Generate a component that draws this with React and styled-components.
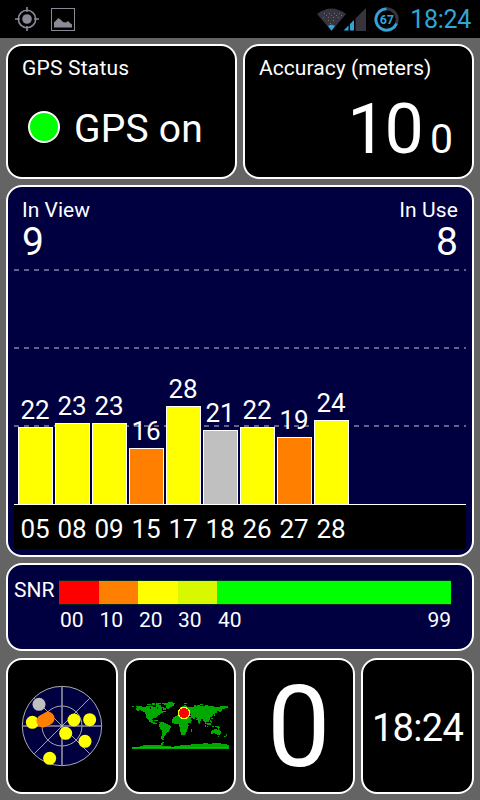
import React from "react";
import styled, { createGlobalStyle } from "styled-components";

const GlobalStyle = createGlobalStyle`
  * { box-sizing: border-box; }
  body { margin: 0; background: #646464; }
`;

const Screen = styled.div`
  width: 480px;
  height: 800px;
  overflow: hidden;
  background: #646464;
  color: #fff;
  font-family: Roboto, "Noto Sans", sans-serif;
`;

const StatusBar = styled.header`
  display: flex;
  align-items: center;
  height: 38px;
  padding: 0 9px 0 15px;
  background: #000;
`;

const StatusIcon = styled.svg`
  display: block;
  flex: none;
  margin-left: ${(p) => p.$gap || 0}px;
`;

const Spacer = styled.div`
  flex: 1;
`;

const Text = styled.span`
  display: block;
  white-space: nowrap;
  font-size: ${(p) => p.$size}px;
  line-height: ${(p) => p.$line}px;
  letter-spacing: ${(p) => p.$track || 0}px;
`;

const Clock = styled(Text)`
  color: #2fa5d8;
  margin-left: 11px;
  padding-top: 2px;
`;

const Panels = styled.main`
  display: grid;
  grid-template-rows: 135px 372px 88px 136px;
  row-gap: 6px;
  padding: 6px 6px 0;
  height: 762px;
`;

const TopRow = styled.div`
  display: grid;
  grid-template-columns: 231px 231px;
  column-gap: 6px;
`;

const BottomRow = styled.div`
  display: grid;
  grid-template-columns: 112px 112px 112px 113px;
  justify-content: space-between;
  margin-top: 1px;
  height: 136px;
`;

const Panel = styled.section`
  border: 2px solid #fff;
  border-radius: 16px;
  background: ${(p) => (p.$navy ? "#000040" : "#000")};
  overflow: hidden;
`;

const InfoPanel = styled(Panel)`
  padding: 10px 14px 0;
`;

const StatusLine = styled.div`
  display: flex;
  align-items: center;
  height: 50px;
  margin-top: 22px;
  padding-left: 6px;
  gap: 14px;
`;

const StatusText = styled(Text)`
  padding-top: 3px;
`;

const Lamp = styled.i`
  width: 32px;
  height: 32px;
  border: 2px solid #fff;
  border-radius: 50%;
  background: #0f0;
`;

const AccuracyLine = styled.div`
  display: flex;
  align-items: baseline;
  justify-content: flex-end;
  margin-top: 9px;
  padding-right: 5px;
  gap: 8px;
`;

const ChartPanel = styled(Panel)`
  padding: 11px 6px 0;
`;

const Counters = styled.div`
  display: flex;
  justify-content: space-between;
  height: 71px;
  padding: 0 8px;
`;

const Counter = styled.div`
  display: flex;
  flex-direction: column;
  align-items: ${(p) => (p.$end ? "flex-end" : "flex-start")};
`;

const dash =
  "repeating-linear-gradient(90deg, #62628a 0 5px, transparent 5px 10px)";

const Plot = styled.div`
  display: flex;
  align-items: flex-end;
  gap: 2px;
  height: 236px;
  padding-left: 4px;
  border-bottom: 1px solid #fff;
  background-image: ${dash}, ${dash}, ${dash};
  background-size: 100% 2px;
  background-position: 0 0, 0 78px, 0 156px;
  background-repeat: no-repeat;
`;

const Column = styled.div`
  width: 35px;
  display: flex;
  flex-direction: column;
  align-items: center;
`;

const Value = styled(Text)`
  padding-right: 1px;
`;

const Bar = styled.div`
  width: 35px;
  height: ${(p) => Math.ceil(p.$snr * 3.5)}px;
  border: 1px solid #fff;
  border-bottom: 0;
  background: ${(p) => p.$color};
`;

const Ids = styled.div`
  display: flex;
  gap: 2px;
  height: 44px;
  padding: 7px 0 0 4px;
  background: #000;
`;

const Id = styled(Text)`
  width: 35px;
  padding-right: 1px;
  text-align: center;
`;

const SnrPanel = styled(Panel)`
  padding: 15px 21px 0 6px;
`;

const SnrRow = styled.div`
  display: flex;
`;

const SnrLabel = styled(Text)`
  width: 45px;
`;

const Scale = styled.div`
  display: flex;
  width: 392px;
  height: 25px;
  border: 1px solid rgba(0, 80, 0, 0.5);
  border-width: 1px 0;
`;

const Segment = styled.div`
  width: ${(p) => p.$w}px;
  background: ${(p) => p.$color};
`;

const Ticks = styled.div`
  display: flex;
  padding-left: 46px;
  margin-top: 2px;
`;

const Tick = styled(Text)`
  width: ${(p) => p.$w}px;
  text-align: ${(p) => (p.$end ? "right" : "left")};
`;

const Tile = styled(Panel)`
  display: flex;
  align-items: center;
  justify-content: center;
`;

const TileText = styled(Text)`
  padding-top: 3px;
`;

const Drawing = styled.svg`
  display: block;
  flex: none;
`;

const YELLOW = "#ffff00";
const ORANGE = "#ff8000";
const GREY = "#c0c0c0";

const satellites = [
  { id: "05", snr: 22, color: YELLOW },
  { id: "08", snr: 23, color: YELLOW },
  { id: "09", snr: 23, color: YELLOW },
  { id: "15", snr: 16, color: ORANGE },
  { id: "17", snr: 28, color: YELLOW },
  { id: "18", snr: 21, color: GREY },
  { id: "26", snr: 22, color: YELLOW },
  { id: "27", snr: 19, color: ORANGE },
  { id: "28", snr: 24, color: YELLOW },
];

const segments = [
  { w: 40, color: "#ff0000" },
  { w: 39, color: ORANGE },
  { w: 40, color: YELLOW },
  { w: 39, color: "#d8f800" },
  { w: 234, color: "#00ff00" },
];

const skyDots = [
  [117, 148, GREY],
  [97, 202, YELLOW],
  [129, 198, ORANGE],
  [137, 194, ORANGE],
  [144, 190, ORANGE],
  [222, 195, YELLOW],
  [269, 194, YELLOW],
  [197, 235, YELLOW],
  [255, 259, YELLOW],
  [149, 310, YELLOW],
];

function GpsIcon() {
  return (
    <StatusIcon width="24" height="24" viewBox="0 0 24 24" fill="none" stroke="#8b8995" strokeWidth="1.6">
      <circle cx="12" cy="12" r="8.7" />
      <circle cx="12" cy="12" r="4.8" fill="#8b8995" stroke="none" />
      <path d="M12 0v5M12 19v5M0 12h5M19 12h5" />
    </StatusIcon>
  );
}

function PictureIcon() {
  return (
    <StatusIcon $gap={12} width="24" height="23" viewBox="0 0 24 23">
      <rect x="0.5" y="0.5" width="23" height="22" fill="none" stroke="#8b8995" />
      <path fill="#8b8995" d="M3 19.5v-5l2-2 2.5-2.5L10 12l2 2 3 0.5 2-1.5 2 2 2 1.5v3z" />
    </StatusIcon>
  );
}

function WifiIcon() {
  return (
    <StatusIcon width="29" height="23" viewBox="0 0 29 23">
      <path fill="#35343f" d="M0 6Q14.500-5 29 6L14.500 23Z" />
      <path fill="#2fa5d8" d="M11 18Q14.500 15.500 18 18L14.500 22.500Z" />
      <path
        stroke="#78772c"
        strokeWidth="1"
        strokeDasharray="1 4"
        d="M7 5.500h16M9 7.500h16M6 9.500h18M11 12.500h9M13 15.500h5"
      />
    </StatusIcon>
  );
}

function SignalIcon() {
  return (
    <StatusIcon $gap={-3} width="23" height="23" viewBox="0 0 23 23">
      <path fill="#35343f" d="M12.500 10.500L23 0v23H12.500z" />
      <path fill="#2fa5d8" d="M0.500 22.500L5.500 17.500V22.500zM7 22.500V16l4-4v10.500z" />
    </StatusIcon>
  );
}

function BatteryIcon() {
  return (
    <StatusIcon $gap={8} width="25" height="25" viewBox="0 0 25 25">
      <circle cx="12.500" cy="12.500" r="10.700" fill="none" stroke="#35343f" strokeWidth="3" />
      <path
        fill="none"
        stroke="#2fa5d8"
        strokeWidth="2.800"
        d="M12.500 1.800A10.700 10.700 0 1 0 22.500 16.500"
      />
      <text
        x="12.800"
        y="17"
        fill="#2fa5d8"
        fontFamily="Roboto, sans-serif"
        fontSize="12.5"
        fontWeight="700"
        textAnchor="middle"
      >
        67
      </text>
    </StatusIcon>
  );
}

function SkyView() {
  return (
    <Drawing width="82" height="88" viewBox="63 81 246 264">
      <circle cx="186" cy="213" r="119" fill="#000040" stroke="#aaaab4" strokeWidth="3" />
      <circle cx="186" cy="213" r="60" fill="none" stroke="#aaaab4" strokeWidth="3" />
      <path stroke="#8c8ca0" strokeWidth="5" d="M186 94v238M67 213h238" />
      <path stroke="#c4c4d0" strokeWidth="2.500" d="M103 130l166 166M269 130L103 296" />
      {skyDots.map(([x, y, color]) => (
        <circle key={`${x}-${y}`} cx={x} cy={y} r="19.500" fill={color} />
      ))}
    </Drawing>
  );
}

function WorldMap() {
  return (
    <Drawing width="98" height="50" viewBox="27 36 294 150" shapeRendering="crispEdges">
      <g fill="#00a800">
        <path d="M30 51h6v3h-6zM42 51h18v3h12v-3h21v3h12v-3h9v6h6v9h9l3 3h-9v3h-6l-3 6h-6v3h-3l-3 3v3h-9l-3 3v3h3v6h6v3h6v3h-12v-3h-6v-3h-6v-6h-3v-3h-3l-3-6v-9h-3v-6h-6v-3H57v-3h-6v3h-6v-3h-3v-6h3v-3h-3z" />
        <path d="M75 45h12v3h-12zM90 42h9v6h-9zM102 42h15v3h-6v3h6v6h9v3h6v6h-9v-6h-9v-3h-12z" />
        <path d="M120 42h18v-3h15v3h6v3h-3v6h-6v3h-6l-3 6h-6v-3h-3v-9h-6v-3h-6z" />
        <path d="M96 93h12v3H96zM111 99h15v3h6v3h6v3h6v3h3v6h-3v6h-3v6h-6v3h-3v6h-3v3h-3v6h-3v3h3v3h-6v-3h-3v-9h3v-18h-3v-3h-3v-6h-3v-9h3z" />
        <path d="M168 78v-6h6v-9h-3v-3h3v-6h6v-3h15v3h21v-3h9v-3h9v3h15v-3h9v3h18v3h21v-3h9v3h12v3h-9v3h-9v6h-3v3h-6v-3h-6v6h-6v3h-6v6h-3v3h-6v9h-3v6h-9v3h6v6h-3v-3h-6v-6h-3v-3h-3v-6h-6v6h-3v9h-3v-3h-3v-9h-6v-3h-9v-3h-6v6h3v3h-3v6h-9v6h3v3h-3v9h-3v9h-3v6h-3v3h-12v-9h-3v-15h-3v-9h-15v-3h-6v-12h3v-6h3z" />
        <path d="M186 42h9v3h-9zM186 48h6v3h-6zM216 48h6v3h-6zM234 45h9v3h-9zM280 66h6v3h-6zM279 81h-3v-9h3zM276 84h-3v6h-6v-3h6v-3zM207 120h3v9h-3zM249 108h3v6h-3zM255 111h3v3h-3zM258 103h9v6h-9zM270 111h6v3h-6zM264 94h3v3h3v6h-3v-3h-3zM279 111h12v3h3v3h-9v-3h-6zM294 51h24v3h-24z" />
        <path d="M267 126h3v-3h6v-3h9v3h3v-6h3v6h3v3h3v9h-3v3h-9v-3h-6v-3h-6v3h-6v-3zM288 141h3v3h-3zM312 135h3v3h-3zM306 141h6v-3h3v3h-3v3h-6z" />
        <path d="M30 177v-3h24v-3h9v-3h54v-6h3v-3h6v3h-3v6h-3v3h27v3h9v-3h18v-3h33v-3h36v-3h15v3h12v-3h27v3h18v3h15v3h-9v3h12v6H30z" />
      </g>
      <path fill="#000" d="M180 78h15v3h12v3h-15v-3h-12zM84 54h3v6h-3zM114 54h-6v6h-3v-6zM219 84h3v3h3v3h-6zM201 75h6v3h-6z" />
      <path fill="#00c800" d="M30 174h288v3H30z" />
      <circle cx="186" cy="72" r="17" fill="#ff0000" stroke="#ffff00" strokeWidth="3" />
    </Drawing>
  );
}

export default function App() {
  return (
    <Screen>
      <GlobalStyle />
      <StatusBar>
        <GpsIcon />
        <PictureIcon />
        <Spacer />
        <WifiIcon />
        <SignalIcon />
        <BatteryIcon />
        <Clock $size={25} $line={38} $track={-0.3}>18:24</Clock>
      </StatusBar>
      <Panels>
        <TopRow>
          <InfoPanel>
            <Text $size={21} $line={24} $track={0.2}>GPS Status</Text>
            <StatusLine>
              <Lamp />
              <StatusText $size={39} $line={50} $track={0.2}>GPS on</StatusText>
            </StatusLine>
          </InfoPanel>
          <InfoPanel>
            <Text $size={21} $line={24} $track={0.05}>Accuracy (meters)</Text>
            <AccuracyLine>
              <Text $size={70} $line={80} $track={-2}>10</Text>
              <Text $size={41} $line={50}>0</Text>
            </AccuracyLine>
          </InfoPanel>
        </TopRow>
        <ChartPanel $navy>
          <Counters>
            <Counter>
              <Text $size={21} $line={24}>In View</Text>
              <Text $size={39} $line={40}>9</Text>
            </Counter>
            <Counter $end>
              <Text $size={21} $line={24} $track={0.1}>In Use</Text>
              <Text $size={39} $line={40}>8</Text>
            </Counter>
          </Counters>
          <Plot>
            {satellites.map((s) => (
              <Column key={s.id}>
                <Value $size={26} $line={34}>{s.snr}</Value>
                <Bar $snr={s.snr} $color={s.color} />
              </Column>
            ))}
          </Plot>
          <Ids>
            {satellites.map((s) => (
              <Id key={s.id} $size={26} $line={34}>{s.id}</Id>
            ))}
          </Ids>
        </ChartPanel>
        <SnrPanel $navy>
          <SnrRow>
            <SnrLabel $size={21} $line={21}>SNR</SnrLabel>
            <Scale>
              {segments.map((s) => (
                <Segment key={s.color} $w={s.w} $color={s.color} />
              ))}
            </Scale>
          </SnrRow>
          <Ticks>
            <Tick $size={21} $line={27} $w={39.5}>00</Tick>
            <Tick $size={21} $line={27} $w={39.5}>10</Tick>
            <Tick $size={21} $line={27} $w={39}>20</Tick>
            <Tick $size={21} $line={27} $w={40}>30</Tick>
            <Tick $size={21} $line={27} $w={60}>40</Tick>
            <Tick $size={21} $line={27} $w={173} $end>99</Tick>
          </Ticks>
        </SnrPanel>
        <BottomRow>
          <Tile><SkyView /></Tile>
          <Tile><WorldMap /></Tile>
          <Tile><TileText $size={113} $line={128}>0</TileText></Tile>
          <Tile><TileText $size={38} $line={128} $track={-0.7}>18:24</TileText></Tile>
        </BottomRow>
      </Panels>
    </Screen>
  );
}
